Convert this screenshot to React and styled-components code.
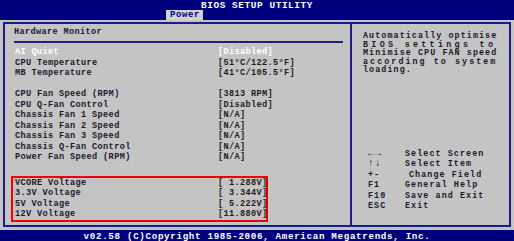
import React from "react";
import styled, { createGlobalStyle } from "styled-components";

const GlobalStyle = createGlobalStyle`
  html, body { margin: 0; padding: 0; background: #c4c4c4; }
  body { width: 514px; height: 241px; overflow: hidden; }
`;

const NAVY = "#00007f";
const INK = "#1a1a2e";

const Screen = styled.div`
  width: 514px;
  height: 241px;
  display: flex;
  flex-direction: column;
  background: #c4c4c4;
  font-family: "Liberation Mono", "DejaVu Sans Mono", monospace;
  font-weight: bold;
  color: ${INK};
`;

const TopBar = styled.header`
  height: 20px;
  background: ${NAVY};
  display: flex;
  flex-direction: column;
`;

const Title = styled.div`
  height: 10px;
  line-height: 12px;
  font-size: 9.4px;
  letter-spacing: 0.6px;
  text-align: center;
  color: #fff;
`;

const Tabs = styled.nav`
  height: 10px;
  display: flex;
  padding-left: 166px;
`;

const Tab = styled.div`
  width: 37px;
  padding-left: 4px;
  box-sizing: border-box;
  background: ${(p) => (p.active ? "#d2d2d2" : "transparent")};
  color: ${(p) => (p.active ? NAVY : "#fff")};
  font-size: 9px;
  letter-spacing: 0.6px;
  line-height: 11px;
`;

const Main = styled.main`
  flex: 1;
  padding: 2px 3px 3px 3px;
  display: flex;
`;

const Frame = styled.div`
  flex: 1;
  display: flex;
  border: 2px solid #1c1c84;
`;

const LeftPanel = styled.section`
  width: 345px;
  padding: 3.4px 7px 0 9px;
  box-sizing: border-box;
  font-size: 8.6px;
  letter-spacing: 0.35px;
`;

const Heading = styled.div`
  line-height: 10.5px;
  padding-bottom: 3px;
  border-bottom: 2px solid #1c1c84;
  margin-bottom: 4.3px;
`;

const Row = styled.div`
  display: grid;
  grid-template-columns: 203px 1fr;
  height: 10.5px;
  line-height: 10.5px;
  padding-left: ${(p) => (p.boxed ? 2 : 1)}px;
  color: ${(p) => (p.selected ? "#fff" : INK)};
  white-space: pre;
`;

const Value = styled.span`
  color: ${(p) => (p.selected ? "#fff" : "#241c1c")};
`;

const Spacer = styled.div`
  height: ${(p) => p.h}px;
`;

const Highlight = styled.div`
  width: 257px;
  margin-left: -3px;
  border: 2px solid #f20000;
  box-sizing: border-box;
`;

const RightPanel = styled.aside`
  flex: 1;
  border-left: 2px solid #1c1c84;
  padding: 8.3px 0 13.6px 11px;
  display: flex;
  flex-direction: column;
  font-size: 8.4px;
  letter-spacing: 1.08px;
`;

const Line = styled.div`
  line-height: 8.5px;
  height: 8.5px;
  white-space: pre;
  letter-spacing: ${(p) => (p.spread ? `${p.spread}px` : "inherit")};
`;

const Help = styled.div`
  margin-top: auto;
  margin-left: 5px;
  display: grid;
  grid-template-columns: 37px 1fr;
  grid-auto-rows: 10.4px;
  line-height: 10.4px;
`;

const Key = styled.span`
  display: block;
  height: 10.4px;
  line-height: 10.4px;
  overflow: hidden;
  white-space: pre;
  font-size: ${(p) => (p.arrow ? 10 : 8.4)}px;
  letter-spacing: ${(p) => (p.arrow ? 1 : 1.08)}px;
`;

const Action = styled.span`
  white-space: pre;
  padding-left: ${(p) => p.indent || 0}px;
`;

const Footer = styled.footer`
  height: 11px;
  overflow: hidden;
  background: ${NAVY};
  color: #fff;
  font-size: 9.2px;
  letter-spacing: 0.68px;
  line-height: 13px;
  text-align: center;
  white-space: pre;
`;

const items = [
  { label: "AI Quiet", value: "[Disabled]", selected: true },
  { label: "CPU Temperature", value: "[51°C/122.5°F]" },
  { label: "MB Temperature", value: "[41°C/105.5°F]" },
  null,
  { label: "CPU Fan Speed (RPM)", value: "[3813 RPM]" },
  { label: "CPU Q-Fan Control", value: "[Disabled]" },
  { label: "Chassis Fan 1 Speed", value: "[N/A]" },
  { label: "Chassis Fan 2 Speed", value: "[N/A]" },
  { label: "Chassis Fan 3 Speed", value: "[N/A]" },
  { label: "Chassis Q-Fan Control", value: "[N/A]" },
  { label: "Power Fan Speed (RPM)", value: "[N/A]" },
];

const voltages = [
  { label: "VCORE Voltage", value: "[ 1.288V]" },
  { label: "3.3V Voltage", value: "[ 3.344V]" },
  { label: "5V Voltage", value: "[ 5.222V]" },
  { label: "12V Voltage", value: "[11.880V]" },
];

const help = [
  { key: "←→", action: "Select Screen", arrow: true },
  { key: "↑↓", action: "Select Item", arrow: true },
  { key: "+-", action: "Change Field", indent: 4 },
  { key: "F1", action: "General Help" },
  { key: "F10", action: "Save and Exit" },
  { key: "ESC", action: "Exit" },
];

const App = () => (
  <Screen>
    <GlobalStyle />
    <TopBar>
      <Title>BIOS SETUP UTILITY</Title>
      <Tabs>
        <Tab active>Power</Tab>
      </Tabs>
    </TopBar>
    <Main>
      <Frame>
        <LeftPanel>
          <Heading>Hardware Monitor</Heading>
          {items.map((it, i) =>
            it ? (
              <Row key={i} selected={it.selected}>
                <span>{it.label}</span>
                <Value selected={it.selected}>{it.value}</Value>
              </Row>
            ) : (
              <Spacer key={i} h={10.5} />
            )
          )}
          <Spacer h={13.2} />
          <Highlight>
            {voltages.map((v) => (
              <Row key={v.label} boxed>
                <span>{v.label}</span>
                <Value>{v.value}</Value>
              </Row>
            ))}
          </Highlight>
        </LeftPanel>
        <RightPanel>
          <Line>Automatically optimise</Line>
          <Line spread={3.3}>BIOS settings to</Line>
          <Line>Minimise CPU FAN speed</Line>
          <Line spread={2.05}>according to system</Line>
          <Line>loading.</Line>
          <Help>
            {help.map((h) => (
              <React.Fragment key={h.key}>
                <Key arrow={h.arrow}>{h.key}</Key>
                <Action indent={h.indent}>{h.action}</Action>
              </React.Fragment>
            ))}
          </Help>
        </RightPanel>
      </Frame>
    </Main>
    <Footer>v02.58 (C)Copyright 1985-2006, American Megatrends, Inc.</Footer>
  </Screen>
);

export default App;
